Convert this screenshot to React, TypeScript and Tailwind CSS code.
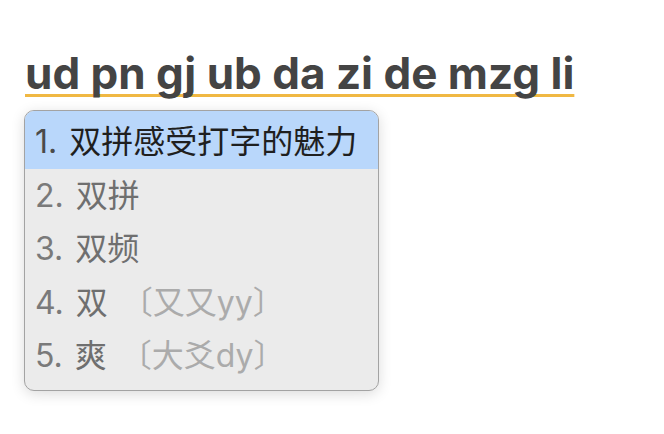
import React from 'react'

type Candidate = {
  text: string
  hint?: string
}

const candidates: Candidate[] = [
  { text: '双拼感受打字的魅力' },
  { text: '双拼' },
  { text: '双频' },
  { text: '双', hint: '〔又又yy〕' },
  { text: '爽', hint: '〔大爻dy〕' },
]

const font = { fontFamily: 'Inter, "Noto Sans CJK SC", sans-serif' }

export default function App() {
  return (
    <div className="min-h-[434px] w-full bg-white pl-[25px] pt-[47px]" style={font}>
      {/* composing text */}
      <div className="h-[52px] text-[44px] leading-[52px] font-bold text-[#444444]">
        <span className="underline decoration-[#f0b843] decoration-[3px] underline-offset-[5px] [text-decoration-skip-ink:none]">
          ud pn gj ub da zi de mzg li
        </span>
      </div>

      {/* candidate window */}
      <div className="mt-[11px] -ml-[1px] w-[355px] overflow-hidden rounded-[10px] border border-[#a3a3a3] bg-[#ebebeb] pb-[7px] shadow-[0_3px_14px_rgba(0,0,0,0.14)]">
        {candidates.map((c, i) => (
          <div
            key={i}
            className={
              i === 0
                ? 'flex h-[58px] items-center bg-[#b9d7fb] pl-[10px] pt-[4px] text-[32px] whitespace-nowrap'
                : 'flex h-[53.5px] items-center pl-[10px] text-[32px] whitespace-nowrap'
            }
          >
            <span className={i === 0 ? 'text-[#4a4a4a]' : 'text-[#7a7a7a]'}>{i + 1}.</span>
            <span className={i === 0 ? 'ml-[12px] text-[#1f1f1f]' : 'ml-[12px] text-[#6f6f6f]'}>{c.text}</span>
            {c.hint && <span className="ml-[13px] text-[#ababab]">{c.hint}</span>}
          </div>
        ))}
      </div>
    </div>
  )
}
